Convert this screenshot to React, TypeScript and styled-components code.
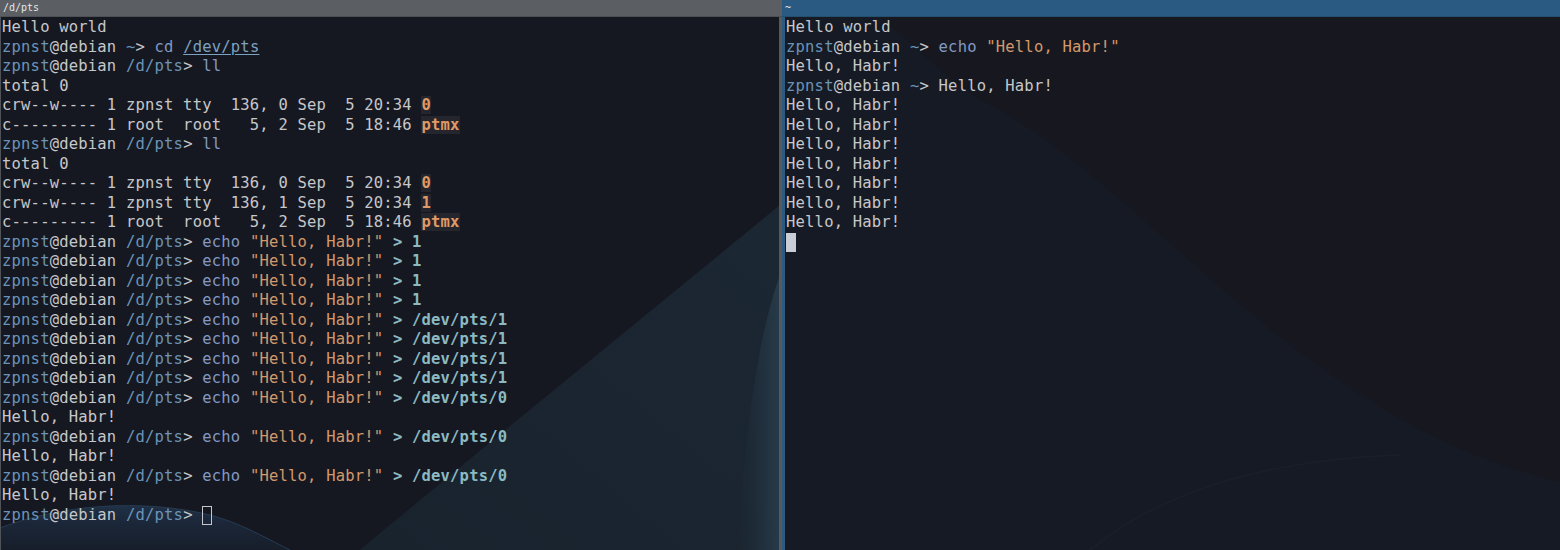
import { Fragment } from 'react'
import { createGlobalStyle, styled } from 'styled-components'

const GlobalStyle = createGlobalStyle`
  html, body {
    margin: 0;
    padding: 0;
    background: #161821;
    overflow: hidden;
  }
`

const Desktop = styled.div`
  display: flex;
  width: 1560px;
  height: 550px;
  overflow: hidden;
`

const Window = styled.section<{ $focused?: boolean }>`
  display: flex;
  flex-direction: column;
  height: 100%;
  flex: ${p => (p.$focused ? '1 1 auto' : '0 0 782px')};
  min-width: 0;
`

const TitleBar = styled.div<{ $focused?: boolean }>`
  flex: 0 0 17px;
  height: 17px;
  line-height: 15px;
  padding: 0 3px;
  box-sizing: border-box;
  background: ${p => (p.$focused ? '#2a5a82' : '#5b5e63')};
  color: #e4e6e8;
  font-family: 'DejaVu Sans Mono', monospace;
  font-size: 10px;
  border-bottom: 1px solid ${p => (p.$focused ? '#24506f' : '#4d5054')};
`

const Screen = styled.div<{ $focused?: boolean }>`
  position: relative;
  flex: 1;
  overflow: hidden;
  background: ${p => (p.$focused ? '#17181f' : '#161821')};
  border-left: ${p => (p.$focused ? '3px solid #2d5b80' : '1px solid #4f5358')};
  border-right: ${p => (p.$focused ? 'none' : '3px solid #565a5f')};
`

const Wallpaper = styled.svg`
  position: absolute;
  inset: 0;
  width: 100%;
  height: 100%;
  z-index: 0;
`

const Output = styled.pre`
  position: relative;
  z-index: 1;
  margin: 0;
  padding: 1px 0 0 1px;
  font-family: 'DejaVu Sans Mono', monospace;
  font-size: 15.5px;
  letter-spacing: 0.2px;
  line-height: 19.5px;
  color: #c6c7ca;
`

const Line = styled.div`
  height: 19.5px;
  white-space: pre;
`

type Tone = 'txt' | 'user' | 'cwd' | 'cmd' | 'str' | 'redir' | 'dev' | 'path'

const toneColor: Record<Tone, string> = {
  txt: '#c6c7ca',
  user: '#6b94b8',
  cwd: '#6b94b8',
  cmd: '#8299c4',
  str: '#d3996b',
  redir: '#8bbac2',
  dev: '#e09a66',
  path: '#7ba2c0',
}

const Token = styled.span<{ $tone: Tone }>`
  color: ${p => toneColor[p.$tone]};
  font-weight: ${p => (p.$tone === 'redir' || p.$tone === 'dev' ? 'bold' : 'normal')};
  background: ${p => (p.$tone === 'dev' ? '#24252d' : 'transparent')};
  text-decoration: ${p => (p.$tone === 'path' ? 'underline' : 'none')};
  text-underline-offset: 2px;
`

const Cursor = styled.span<{ $filled?: boolean }>`
  display: inline-block;
  vertical-align: top;
  box-sizing: border-box;
  width: 10px;
  height: 19px;
  background: ${p => (p.$filled ? '#c9cdd5' : 'transparent')};
  border: ${p => (p.$filled ? 'none' : '1.5px solid #c6c7ca')};
`

type Part = [Tone, string]
type Row = { parts: Part[]; cursor?: 'hollow' | 'filled' }

const prompt = (cwd: string): Part[] => [
  ['user', 'zpnst'],
  ['txt', '@debian '],
  ['cwd', cwd],
  ['txt', '> '],
]

const echo = (target: string): Row => ({
  parts: [...prompt('/d/pts'), ['cmd', 'echo '], ['str', '"Hello, Habr!"'], ['txt', ' '], ['redir', '> ' + target]],
})

const text = (s: string): Row => ({ parts: [['txt', s]] })

const leftRows: Row[] = [
  text('Hello world'),
  { parts: [...prompt('~'), ['cmd', 'cd '], ['path', '/dev/pts']] },
  { parts: [...prompt('/d/pts'), ['cmd', 'll']] },
  text('total 0'),
  { parts: [['txt', 'crw--w---- 1 zpnst tty  136, 0 Sep  5 20:34 '], ['dev', '0']] },
  { parts: [['txt', 'c--------- 1 root  root   5, 2 Sep  5 18:46 '], ['dev', 'ptmx']] },
  { parts: [...prompt('/d/pts'), ['cmd', 'll']] },
  text('total 0'),
  { parts: [['txt', 'crw--w---- 1 zpnst tty  136, 0 Sep  5 20:34 '], ['dev', '0']] },
  { parts: [['txt', 'crw--w---- 1 zpnst tty  136, 1 Sep  5 20:34 '], ['dev', '1']] },
  { parts: [['txt', 'c--------- 1 root  root   5, 2 Sep  5 18:46 '], ['dev', 'ptmx']] },
  echo('1'),
  echo('1'),
  echo('1'),
  echo('1'),
  echo('/dev/pts/1'),
  echo('/dev/pts/1'),
  echo('/dev/pts/1'),
  echo('/dev/pts/1'),
  echo('/dev/pts/0'),
  text('Hello, Habr!'),
  echo('/dev/pts/0'),
  text('Hello, Habr!'),
  echo('/dev/pts/0'),
  text('Hello, Habr!'),
  { parts: prompt('/d/pts'), cursor: 'hollow' },
]

const rightRows: Row[] = [
  text('Hello world'),
  { parts: [...prompt('~'), ['cmd', 'echo '], ['str', '"Hello, Habr!"']] },
  text('Hello, Habr!'),
  { parts: [...prompt('~'), ['txt', 'Hello, Habr!']] },
  ...Array.from({ length: 7 }, () => text('Hello, Habr!')),
  { parts: [], cursor: 'filled' },
]

function Terminal({ rows }: { rows: Row[] }) {
  return (
    <Output>
      {rows.map((row, i) => (
        <Line key={i}>
          {row.parts.map(([tone, s], j) => (
            <Token key={j} $tone={tone}>{s}</Token>
          ))}
          {row.cursor && <Cursor $filled={row.cursor === 'filled'} />}
        </Line>
      ))}
    </Output>
  )
}

// wallpaper seen through the left terminal, drawn in page coordinates
function LeftWallpaper() {
  return (
    <Wallpaper viewBox="1 17 778 533" preserveAspectRatio="none">
      <defs>
        <linearGradient id="band" x1="0" y1="1" x2="1" y2="0">
          <stop offset="0" stopColor="#19232e" />
          <stop offset="1" stopColor="#1b2733" />
        </linearGradient>
        <linearGradient id="streak" x1="0" y1="0" x2="1" y2="0">
          <stop offset="0" stopColor="#22323f" stopOpacity="0" />
          <stop offset="1" stopColor="#283b4a" />
        </linearGradient>
        <linearGradient id="glow" x1="0" y1="0" x2="0" y2="1">
          <stop offset="0" stopColor="#1f3045" />
          <stop offset="0.5" stopColor="#1a2536" />
          <stop offset="1" stopColor="#171e2a" />
        </linearGradient>
      </defs>
      <path d="M360,550 C480,450 640,320 780,205 L780,550 Z" fill="url(#band)" />
      <path d="M780,275 C760,330 745,420 738,550 L780,550 Z" fill="url(#streak)" />
      <path d="M0,528 C60,505 140,498 210,515 C240,523 260,535 290,550 L0,550 Z" fill="url(#glow)" />
      <path d="M0,528 C60,505 140,498 210,515 C240,523 260,535 290,550" fill="none" stroke="#253a52" strokeWidth="1" />
    </Wallpaper>
  )
}

function RightWallpaper() {
  return (
    <Wallpaper viewBox="785 17 775 533" preserveAspectRatio="none">
      <path d="M785,17 L880,17 C930,60 960,90 990,105 C1150,190 1300,420 1560,482 L1560,550 L785,550 Z" fill="#161a24" />
      <path d="M1090,550 C1150,500 1250,460 1400,455" fill="none" stroke="#1a1e29" strokeWidth="2" />
    </Wallpaper>
  )
}

export default function App() {
  return (
    <Fragment>
      <GlobalStyle />
      <Desktop>
        <Window>
          <TitleBar>/d/pts</TitleBar>
          <Screen>
            <LeftWallpaper />
            <Terminal rows={leftRows} />
          </Screen>
        </Window>
        <Window $focused>
          <TitleBar $focused>~</TitleBar>
          <Screen $focused>
            <RightWallpaper />
            <Terminal rows={rightRows} />
          </Screen>
        </Window>
      </Desktop>
    </Fragment>
  )
}
